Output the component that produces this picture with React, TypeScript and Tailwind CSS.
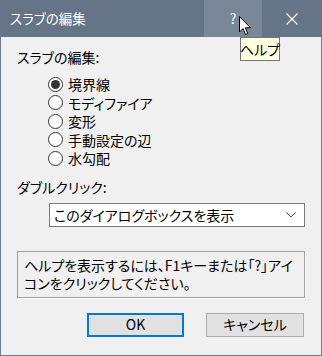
import React from "react";

const font = { fontFamily: '"Noto Sans CJK JP", "Noto Sans", sans-serif' };

function Radio({ label, checked }: { label: string; checked?: boolean }) {
  return (
    <div className="flex items-center h-[18.5px]">
      <div className="w-[15px] h-[15px] rounded-full border border-[#333333] bg-white flex items-center justify-center">
        {checked && <div className="w-[9px] h-[9px] rounded-full bg-[#333333]" />}
      </div>
      <span className="ml-[5px] text-[14px] leading-[18px] text-black">{label}</span>
    </div>
  );
}

export default function App() {
  return (
    <div className="relative w-[322px] h-[356px] bg-[#f0f0f0] flex flex-col [font-feature-settings:'palt']" style={font}>
      {/* title bar */}
      <div className="h-[37px] bg-[#657487] flex items-stretch shrink-0">
        <div className="flex-1 flex items-center pl-[10px] text-white text-[13.5px]">スラブの編集</div>
        <div className="w-[58px] bg-[#7a8799] flex items-center justify-center text-white text-[14px]">?</div>
        <div className="w-[60px] flex items-center justify-center">
          <svg width="12" height="12" viewBox="0 0 12 12">
            <path d="M0.5 0.5 L11.5 11.5 M11.5 0.5 L0.5 11.5" stroke="white" strokeWidth="1.1" />
          </svg>
        </div>
      </div>
      {/* body */}
      <div className="flex-1 flex flex-col border-l border-r border-b border-[#6f7d8e] px-[16px]">
        <div className="mt-[12px] text-[14px] leading-[16px] text-black">スラブの編集:</div>
        <div className="mt-[10px] ml-[31px] flex flex-col">
          <Radio label="境界線" checked />
          <Radio label="モディファイア" />
          <Radio label="変形" />
          <Radio label="手動設定の辺" />
          <Radio label="水勾配" />
        </div>
        <div className="mt-[11px] text-[14px] leading-[16px] text-black">ダブルクリック:</div>
        <div className="mt-[8px] ml-[32px] w-[256px] h-[24px] bg-white border border-[#7a7a7a] flex items-center justify-between pl-[4px] pr-[8px]">
          <span className="text-[14px] leading-[18px] text-black">このダイアログボックスを表示</span>
          <svg width="10" height="6" viewBox="0 0 10 6">
            <path d="M0.5 0.5 L5 5 L9.5 0.5" stroke="#444" fill="none" strokeWidth="1" />
          </svg>
        </div>
        <div className="mt-[24px] w-[288px] h-[47px] border border-[#a0a0a0] shadow-[1px_1px_0_#ffffff] pl-[6px] pr-0 pt-[4px] text-[14px] leading-[18px] text-black">
          ヘルプを表示するには、F1キーまたは「?」アイコンをクリックしてください。
        </div>
        <div className="mt-[15px] flex justify-end gap-[22px] pr-[1px]">
          <div className="w-[97px] h-[24px] border-2 border-[#0078d7] bg-[#e1e1e1] flex items-center justify-center text-[14px] text-black">OK</div>
          <div className="w-[98px] h-[24px] border border-[#adadad] bg-[#e1e1e1] flex items-center justify-center text-[14px] text-black">キャンセル</div>
        </div>
      </div>
      {/* tooltip */}
      <div className="absolute left-[240px] top-[37px] w-[40px] h-[24px] bg-[#ffffe1] border border-[#767676] flex items-center justify-center whitespace-nowrap text-[14px] leading-[18px] text-black">ヘルプ</div>
      {/* cursor */}
      <svg className="absolute left-[239px] top-[16px]" width="13" height="20" viewBox="0 0 13 20">
        <path d="M0.5 0.5 L0.5 16 L4 12.5 L6.5 18.5 L8.8 17.5 L6.3 11.8 L11.5 11.8 Z" fill="white" stroke="black" strokeWidth="1" />
      </svg>
    </div>
  );
}
